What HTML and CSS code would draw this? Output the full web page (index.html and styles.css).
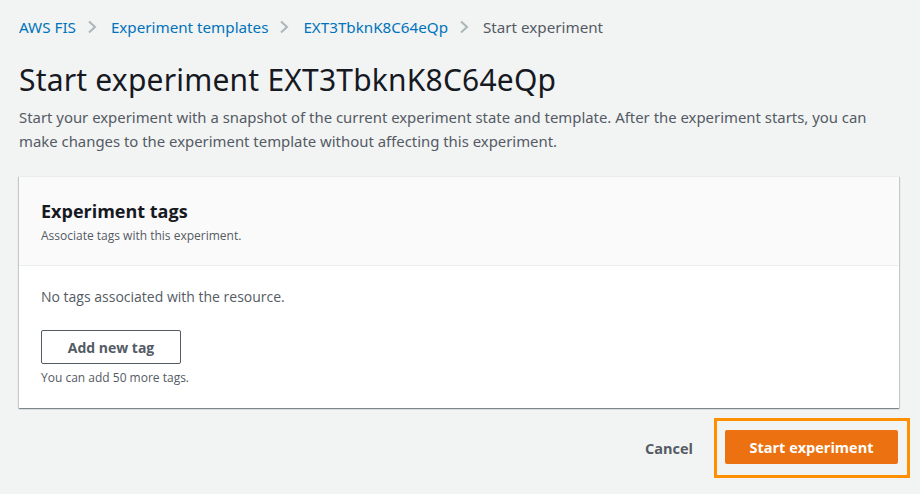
FILE: index.html
```html
<!DOCTYPE html>
<html>
<head>
<meta charset="utf-8">
<link rel="stylesheet" href="styles.css">
</head>
<body>
<div class="page">
  <nav class="crumbs">
    <a class="crumb">AWS FIS</a>
    <svg class="chev" width="10" height="14" viewBox="0 0 10 14"><path d="M2 1.5 L8 7 L2 12.5" fill="none" stroke="#aab7b8" stroke-width="2"/></svg>
    <a class="crumb">Experiment templates</a>
    <svg class="chev" width="10" height="14" viewBox="0 0 10 14"><path d="M2 1.5 L8 7 L2 12.5" fill="none" stroke="#aab7b8" stroke-width="2"/></svg>
    <a class="crumb">EXT3TbknK8C64eQp</a>
    <svg class="chev" width="10" height="14" viewBox="0 0 10 14"><path d="M2 1.5 L8 7 L2 12.5" fill="none" stroke="#aab7b8" stroke-width="2"/></svg>
    <span class="crumb current">Start experiment</span>
  </nav>
  <h1 class="title">Start experiment EXT3TbknK8C64eQp</h1>
  <p class="desc">Start your experiment with a snapshot of the current experiment state and template. After the experiment starts, you can make changes to the experiment template without affecting this experiment.</p>
  <section class="card">
    <header class="card-head">
      <h2 class="card-title">Experiment tags</h2>
      <div class="card-sub">Associate tags with this experiment.</div>
    </header>
    <div class="card-body">
      <div class="empty">No tags associated with the resource.</div>
      <button class="btn-normal">Add new tag</button>
      <div class="hint">You can add 50 more tags.</div>
    </div>
  </section>
  <div class="actions">
    <button class="btn-link">Cancel</button>
    <div class="highlight">
      <button class="btn-primary">Start experiment</button>
    </div>
  </div>
</div>
</body>
</html>
```
FILE: styles.css
```css
* { box-sizing: border-box; }
html, body { margin: 0; padding: 0; }
body {
  background: #f2f3f3;
  font-family: "Open Sans", "Liberation Sans", sans-serif;
  color: #16191f;
  width: 920px;
  height: 494px;
  overflow: hidden;
}
.page {
  padding: 17px 21px 0 19px;
}
.crumbs {
  display: flex;
  align-items: center;
  font-size: 15.2px;
  height: 20px;
  font-family: "Noto Sans", sans-serif;
}
.crumb { color: #0073bb; text-decoration: none; }
.crumb.current { color: #545b64; }
.chev { display: block; margin: 0 14px 0 11px; }
.title {
  margin: 25px 0 0;
  font-size: 30px;
  font-weight: 400;
  line-height: 36px;
  letter-spacing: 0.2px;
  font-family: "Noto Sans", sans-serif;
}
.desc {
  margin: 7px 0 0;
  font-size: 14.9px;
  line-height: 24px;
  color: #545b64;
  font-family: "Noto Sans", sans-serif;
}
.card {
  margin-top: 23px;
  width: 880px;
  background: #fff;
  border-top: 1px solid #eaeded;
  box-shadow: 0 1px 1px 0 rgba(0,28,36,0.3), 1px 1px 1px 0 rgba(0,28,36,0.15), -1px 1px 1px 0 rgba(0,28,36,0.15);
}
.card-head {
  background: #fafafa;
  border-bottom: 1px solid #eaeded;
  padding: 23px 22px 21px;
}
.card-title {
  margin: 0;
  font-size: 18px;
  font-weight: 700;
  line-height: 22px;
}
.card-sub {
  margin-top: 6px;
  font-size: 12px;
  line-height: 16px;
  color: #545b64;
}
.card-body {
  padding: 20px 22px 22px;
}
.empty {
  font-size: 14px;
  line-height: 22px;
  color: #545b64;
}
.btn-normal {
  margin-top: 22px;
  display: block;
  width: 140px;
  height: 34px;
  background: #fff;
  border: 1px solid #545b64;
  border-radius: 2px;
  font-family: inherit;
  font-size: 14px;
  font-weight: 700;
  color: #545b64;
}
.hint {
  margin-top: 6px;
  font-size: 12px;
  line-height: 16px;
  color: #545b64;
}
.actions {
  margin-top: 10px;
  display: flex;
  justify-content: flex-end;
  align-items: center;
  gap: 21px;
  margin-right: -11px;
}
.btn-link {
  background: none;
  border: none;
  font-family: inherit;
  font-size: 14.5px;
  font-weight: 700;
  color: #545b64;
  padding: 0;
}
.highlight {
  border: 3px solid #ff9000;
  padding: 9px 9px 11px 8px;
}
.btn-primary {
  display: block;
  width: 173px;
  height: 34px;
  background: #ec7211;
  border: none;
  border-radius: 2px;
  font-family: inherit;
  font-size: 14.5px;
  font-weight: 700;
  color: #fff;
}
```
